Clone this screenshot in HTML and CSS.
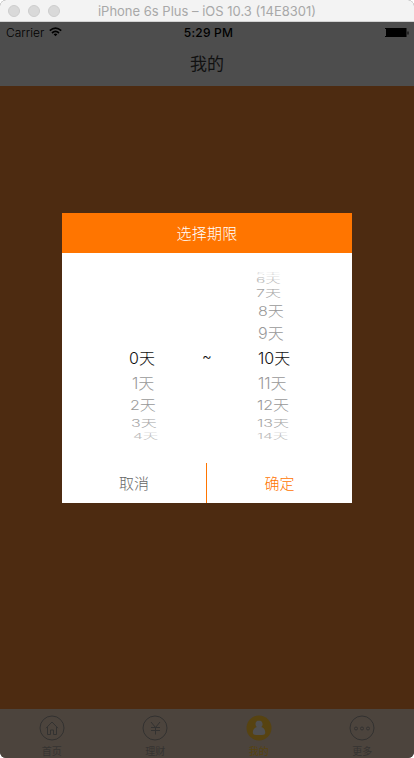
FILE: index.html
```html
<!DOCTYPE html>
<html lang="zh-CN">
<head>
<meta charset="utf-8">
<title>我的</title>
<link rel="stylesheet" href="styles.css">
</head>
<body>
<div class="window">
  <header class="titlebar">
    <div class="lights"><i></i><i></i><i></i></div>
    <span class="device">iPhone 6s Plus – iOS 10.3 (14E8301)</span>
  </header>
  <div class="status">
    <div class="carrier"><span>Carrier</span>
      <svg width="13" height="10" viewBox="0 0 13 10" fill="none" stroke="#000" stroke-width="1.7"><path d="M.8 3.7Q6.5-1.5 12.2 3.7M3 6Q6.5 2.9 10 6"/><path d="M6.5 9.2 4.6 7.3Q6.5 5.8 8.4 7.3Z" fill="#000" stroke="none"/></svg>
    </div>
    <b class="clock">5:29 PM</b>
    <svg class="battery" width="24" height="10" viewBox="0 0 24 10"><path d="M0 0h1v1H0zM0 8h1v1H0zM1 0h20.500v9H1zM22.500 3.500h1v3h-1z"/></svg>
  </div>
  <div class="navbar">我的</div>
  <main class="screen">
    <section class="dialog">
      <h1 class="dialog-title">选择期限</h1>
      <div class="picker">
        <ul class="wheel start">
          <li class="r5"></li><li class="r4"></li><li class="r3"></li><li class="r2"></li><li class="r1"></li>
          <li class="r0"><span>0天</span></li>
          <li class="r1 below"><span>1天</span></li>
          <li class="r2 below"><span>2天</span></li>
          <li class="r3 below"><span>3天</span></li>
          <li class="r4 below"><span>4天</span></li>
        </ul>
        <span class="tilde">~</span>
        <ul class="wheel end">
          <li class="r5"><span>5天</span></li>
          <li class="r4"><span>6天</span></li>
          <li class="r3"><span>7天</span></li>
          <li class="r2"><span>8天</span></li>
          <li class="r1"><span>9天</span></li>
          <li class="r0"><span>10天</span></li>
          <li class="r1 below"><span>11天</span></li>
          <li class="r2 below"><span>12天</span></li>
          <li class="r3 below"><span>13天</span></li>
          <li class="r4 below"><span>14天</span></li>
        </ul>
      </div>
      <div class="actions"><button class="cancel">取消</button><button class="confirm">确定</button></div>
    </section>
  </main>
  <nav class="tabs">
    <a class="tab"><svg width="26" height="26" viewBox="0 0 26 26"><circle cx="13" cy="13" r="12"/><path d="M7 13.200 13 7l6 6.200M8.500 12v7.500h3V15h3v4.500h3V12"/></svg><span>首页</span></a>
    <a class="tab"><svg width="26" height="26" viewBox="0 0 26 26"><circle cx="13" cy="13" r="12"/><path d="M9 7l4.500 5.500L18 7M13.500 12.500v7M9 12.500h9M9 15.500h9"/></svg><span>理财</span></a>
    <a class="tab active"><svg width="26" height="26" viewBox="0 0 26 26"><circle class="disc" cx="13" cy="13" r="12.500"/><path class="person" d="M13 5.500c-2.300 0-3.700 1.700-3.500 3.800.1 1.300.7 2.200 1.300 2.700-2.700.8-4 3-4 5.500 0 1.700 1.300 2.500 3 2.500h6.500c1.700 0 3-.8 3-2.500 0-2.500-1.400-4.700-4-5.500.7-.5 1.200-1.400 1.300-2.700.1-2.100-1.300-3.800-3.600-3.800z"/></svg><span>我的</span></a>
    <a class="tab"><svg width="26" height="26" viewBox="0 0 26 26"><circle cx="13" cy="13" r="12"/><circle cx="7" cy="13.500" r="1.500"/><circle cx="13" cy="13.500" r="1.500"/><circle cx="19" cy="13.500" r="1.500"/></svg><span>更多</span></a>
  </nav>
</div>
</body>
</html>
```
FILE: styles.css
```css
* { box-sizing: border-box; }
body { margin: 0; background: #fff; font-family: Inter, "Noto Sans CJK SC", sans-serif; }
.window { width: 414px; height: 758px; display: flex; flex-direction: column; overflow: hidden; border-radius: 6px; background: #4d4d4d; }
.titlebar { height: 22px; display: grid; grid-template-columns: 70px 1fr 70px; align-items: center; background: #f3f3f3; border-bottom: 1px solid #d2d2d2; }
.lights { display: flex; gap: 8px; padding-left: 8px; }
.lights i { width: 12px; height: 12px; border-radius: 50%; background: #d9d9d9; border: 1px solid #cdcdcd; }
.device { font-size: 13px; line-height: 20px; text-align: center; white-space: nowrap; color: #a8a8a8; }
.status { height: 21px; padding: 0 6px; display: grid; grid-template-columns: 1fr auto 1fr; align-items: center; color: #000; font-size: 12px; line-height: 20px; }
.carrier { display: flex; align-items: center; gap: 5px; font-weight: 300; }
.carrier svg { margin-top: -2px; }
.clock { font-weight: 500; letter-spacing: .2px; margin-left: 3px; }
.battery { justify-self: end; margin-right: -1px; }
.navbar { height: 43px; line-height: 42px; text-align: center; font-size: 17px; font-weight: 400; color: #111; }
.screen { height: 623px; padding: 127px 62px 0; background: #4d2b11; }
.dialog { width: 290px; height: 290px; background: #fff; display: flex; flex-direction: column; }
.dialog-title { height: 40px; margin: 0; line-height: 42px; text-align: center; background: #ff7500; color: #fff; font-size: 15px; font-weight: 300; letter-spacing: .2px; }
.picker { height: 210px; padding-top: 19px; display: grid; grid-template-columns: 139px 50px 101px; }
.wheel { list-style: none; margin: 0; padding: 0; height: 168px; overflow: hidden; }
.wheel li { display: flex; align-items: center; color: #999; font-size: 16px; font-weight: 300; line-height: 24px; white-space: nowrap; }
.wheel span { transform-origin: 0 50%; }
.wheel .r0 { height: 26px; color: #111; }
.wheel .r1 { height: 24px; }
.wheel .r2 { height: 20px; }
.wheel .r3 { height: 16px; color: #a5a5a5; }
.wheel .r4 { height: 10px; color: #bbb; }
.wheel .r5 { height: 3px; color: #ddd; overflow: hidden; }
.r1 span { transform: scale(1, .95); }
.r2 span { transform: scale(1, .85); }
.r3 span { transform: scale(1, .64); }
.r4 span { transform: scale(.97, .48); }
.r5 span { transform: scale(.97, .3); }
.start .r0 { padding-left: 67px; }
.start .r1 { padding-left: 70px; }
.start .r2 { padding-left: 68px; }
.start .r3 { padding-left: 69px; }
.start .r4 { padding-left: 71px; }
.end li { padding-left: 7px; }
.end .r3, .end .r4, .end .r5 { padding-left: 5px; }
.end .r2.below, .end .r3.below, .end .r4.below { padding-left: 6px; }
.tilde { height: 24px; margin-top: 73px; line-height: 24px; font-size: 15px; font-weight: 300; color: #111; padding-left: 1px; }
.actions { height: 40px; display: grid; grid-template-columns: 145px 145px; grid-template-rows: 40px; }
.actions button { height: 40px; border: 0; padding: 2px 0 0; background: none; font: 300 15px/38px Inter, "Noto Sans CJK SC", sans-serif; }
.actions .cancel { color: #666; border-right: 1px solid #ff7500; }
.actions .confirm { color: #ff7500; }
.tabs { height: 49px; display: grid; grid-template-columns: repeat(4, 1fr); background: #4c443d; }
.tab { display: flex; flex-direction: column; align-items: center; padding-top: 6px; color: #353331; font-size: 10px; line-height: 20px; }
.tab svg { fill: none; stroke: #333231; stroke-width: 1; flex: none; }
.tab.active { color: #574311; }
.tab .disc { fill: #574311; stroke: none; }
.tab .person { fill: #505051; stroke: none; }
```
